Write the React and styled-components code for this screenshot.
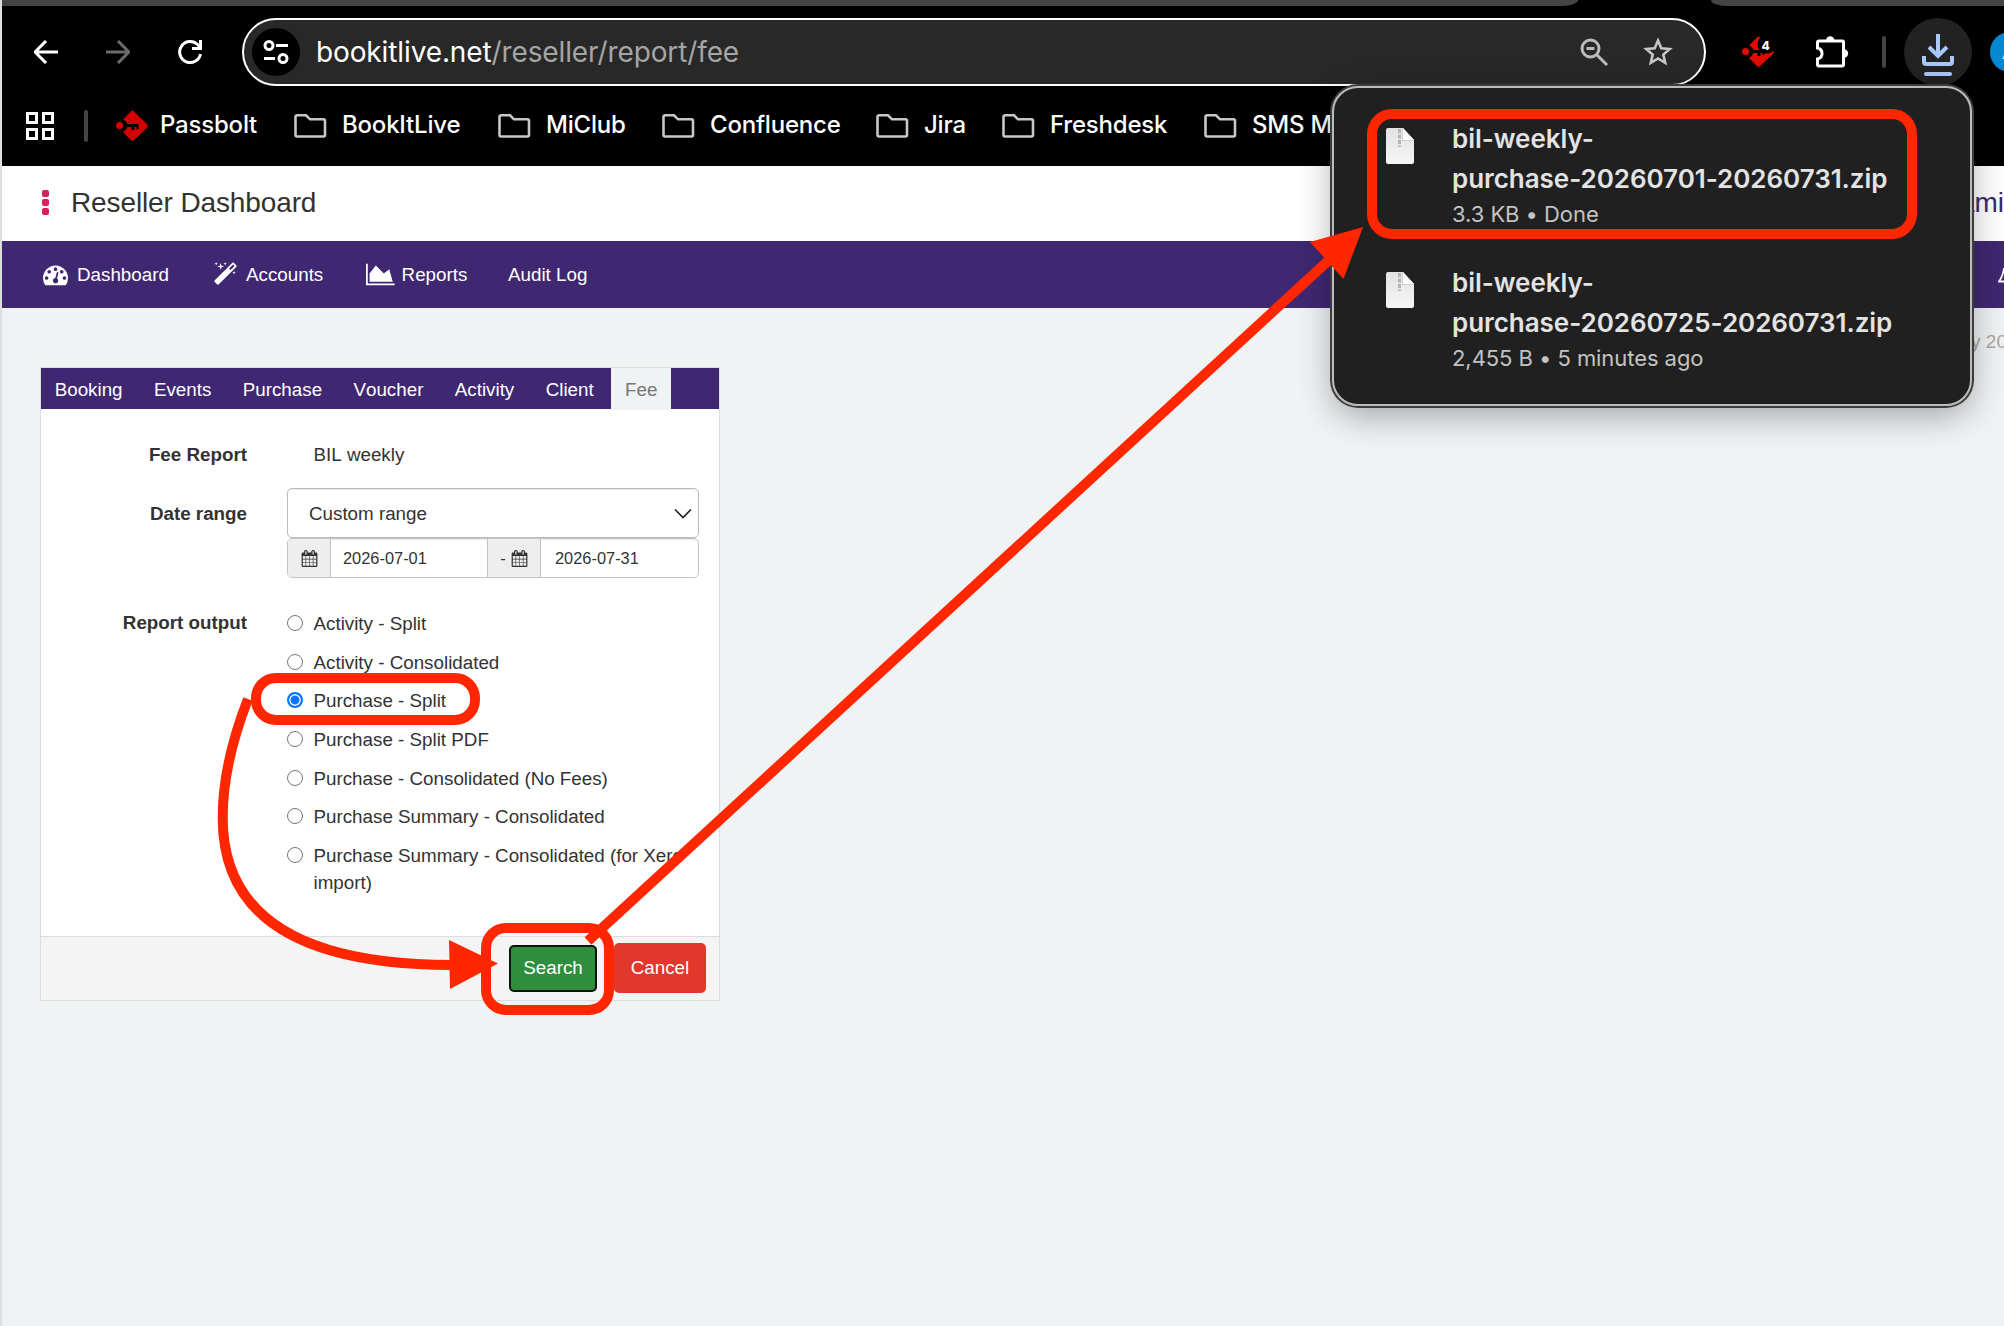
import React from 'react';
import styled, { createGlobalStyle } from 'styled-components';

const GlobalStyle = createGlobalStyle`
  * {
    box-sizing: border-box;
  }
  body {
    margin: 0;
    background: #eff3f4;
  }
`;

const ui = `Inter, 'Noto Sans', sans-serif`;
const purple = '#402771';
const red = '#ff2600';

const Window = styled.div`
  position: relative;
  width: 2004px;
  height: 1326px;
  overflow: hidden;
  background: #eff3f4;
  border-left: 2px solid #dcdfe2;
  font-family: 'Liberation Sans', Arial, sans-serif;
  font-size: 18.8px;
  font-kerning: none;
  color: #333;
`;

const Browser = styled.header`
  height: 166px;
  background: #000;
  font-family: ${ui};
  font-kerning: auto;
  color: #fff;
`;

const TabStrip = styled.div`
  display: flex;
  justify-content: space-between;
  height: 6px;
  background: #000;
`;

const InactiveTab = styled.div`
  width: ${(p) => p.$width}px;
  background: #444;
  border-radius: ${(p) => (p.$right ? '0 0 0 16px / 0 0 0 6px' : '0 0 16px 0 / 0 0 6px 0')};
`;

const Toolbar = styled.div`
  display: flex;
  align-items: center;
  height: 92px;
  padding-left: 24px;
`;

const ToolButton = styled.div`
  display: flex;
  flex: none;
  align-items: center;
  justify-content: center;
  width: 40px;
  height: 40px;
  margin-left: ${(p) => p.$before || 0}px;
  margin-right: ${(p) => p.$gap || 0}px;
`;

const Omnibox = styled.div`
  display: flex;
  flex: none;
  align-items: center;
  width: 1464px;
  height: 68px;
  padding: 0 26px 0 8px;
  border: 2px solid #fff;
  border-radius: 34px;
  background: #282828;
`;

const SiteInfo = styled.div`
  display: flex;
  align-items: center;
  justify-content: center;
  width: 48px;
  height: 48px;
  margin-right: 16px;
  border-radius: 50%;
  background: #000;
`;

const Url = styled.div`
  flex: 1;
  font-size: 28px;
  letter-spacing: -0.12px;
  white-space: nowrap;
  span {
    color: #a5a5a5;
  }
`;

const Separator = styled.div`
  flex: none;
  width: 4px;
  height: 32px;
  border-radius: 2px;
  background: #444;
  margin: 0 ${(p) => p.$after}px 0 ${(p) => p.$before}px;
`;

const DownloadButton = styled.div`
  display: flex;
  flex: none;
  align-items: center;
  justify-content: center;
  width: 68px;
  height: 68px;
  padding-top: 6px;
  border-radius: 50%;
  background: #222;
`;

const Avatar = styled.div`
  flex: none;
  width: 40px;
  height: 40px;
  margin-left: 18px;
  padding: 8px 0 0 12px;
  border-radius: 50%;
  background: #0488d2;
  font-size: 20px;
`;

const Bookmarks = styled.div`
  display: flex;
  align-items: center;
  height: 56px;
  padding-left: 24px;
`;

const Bookmark = styled.div`
  display: flex;
  flex: none;
  align-items: center;
  gap: ${(p) => p.$gap || 15}px;
  width: ${(p) => p.$width}px;
  font-size: 24px;
  font-weight: 500;
  line-height: 28px;
  letter-spacing: -0.2px;
  white-space: nowrap;
  span {
    padding-bottom: 2px;
  }
`;

const PageHeader = styled.div`
  display: flex;
  align-items: center;
  height: 75px;
  padding-left: 40px;
  background: #fff;
  font-size: 28px;
`;

const Dots = styled.div`
  display: flex;
  flex-direction: column;
  gap: 2px;
  margin-right: 22px;
  padding-bottom: 2px;
  i {
    width: 7px;
    height: 7px;
    border-radius: 2px;
    background: #db1f5b;
  }
`;

const PageTitle = styled.div`
  flex: 1;
  padding-bottom: 1px;
  letter-spacing: -0.12px;
`;

const UserName = styled.div`
  padding-bottom: 1px;
  color: ${purple};
`;

const Nav = styled.nav`
  display: flex;
  align-items: center;
  height: 67px;
  padding-left: 41px;
  background: ${purple};
  color: #fff;
`;

const NavItem = styled.div`
  display: flex;
  align-items: center;
  gap: ${(p) => p.$gap || 0}px;
  width: ${(p) => p.$width}px;
  white-space: nowrap;
`;

const NavBell = styled.div`
  display: flex;
  justify-content: flex-start;
  width: 6px;
  margin-left: auto;
`;

const DateLine = styled.div`
  height: 59px;
  padding-top: 23px;
  margin-right: -3px;
  text-align: right;
  font-size: 19px;
  color: #aaa69f;
`;

const Panel = styled.section`
  display: flex;
  flex-direction: column;
  width: 680px;
  height: 634px;
  margin-left: 38px;
  border: 1px solid #ddd;
  background: #fff;
`;

const Tabs = styled.div`
  display: flex;
  gap: 4px;
  height: 41px;
  background: ${purple};
`;

const Tab = styled.div`
  height: ${(p) => (p.$active ? 42 : 41)}px;
  padding: 0 13.7px;
  line-height: 43px;
  background: ${(p) => (p.$active ? '#eff3f4' : 'transparent')};
  color: ${(p) => (p.$active ? '#777' : '#fff')};
`;

const Form = styled.div`
  display: grid;
  grid-template-columns: 206px 412px;
  column-gap: 40px;
  align-content: start;
  flex: 1;
  padding-top: 32px;
`;

const Label = styled.div`
  height: ${(p) => p.$height}px;
  line-height: 27px;
  padding-top: ${(p) => p.$top || 0}px;
  text-align: right;
  font-weight: bold;
`;

const Value = styled.div`
  padding-left: 26.5px;
  line-height: 27px;
`;

const Select = styled.div`
  display: flex;
  align-items: center;
  justify-content: space-between;
  height: 50px;
  padding: 1px 5px 0 21px;
  border: 1px solid #bbb;
  border-radius: 5px;
  box-shadow: inset 0 1px 1px rgba(0, 0, 0, 0.08);
`;

const DateGroup = styled.div`
  display: grid;
  grid-template-columns: 43px 156px 54px 157px;
  height: 40px;
  border: 1px solid #c4c4c4;
  border-radius: 5px;
  overflow: hidden;
  font-size: 16.4px;
`;

const Addon = styled.div`
  display: flex;
  align-items: center;
  justify-content: center;
  gap: 5px;
  background: #eee;
  border-right: 1px solid #c4c4c4;
  border-left: ${(p) => (p.$middle ? '1px solid #c4c4c4' : 'none')};
`;

const DateInput = styled.div`
  display: flex;
  align-items: center;
  padding-left: ${(p) => p.$indent}px;
  box-shadow: inset 0 1px 1px rgba(0, 0, 0, 0.08);
`;

const Options = styled.div`
  display: flex;
  flex-direction: column;
  gap: 11.7px;
  padding-top: 1px;
`;

const Option = styled.label`
  display: flex;
  align-items: flex-start;
  gap: 10.5px;
  line-height: 27px;
`;

const Radio = styled.span`
  flex: none;
  width: 16px;
  height: 16px;
  margin-top: 5px;
  border: ${(p) => (p.$checked ? '2px solid #0a75ff' : '1px solid #767676')};
  border-radius: 50%;
  background: ${(p) => (p.$checked ? '#0a75ff' : '#fff')};
  box-shadow: ${(p) => (p.$checked ? 'inset 0 0 0 1.5px #fff' : 'none')};
`;

const Footer = styled.div`
  display: flex;
  align-items: center;
  justify-content: flex-end;
  gap: 17px;
  height: 64px;
  padding: 0 13px 1px 0;
  border-top: 1px solid #ddd;
  background: #f4f4f4;
`;

const Button = styled.div`
  display: flex;
  align-items: center;
  justify-content: center;
  width: ${(p) => p.$width}px;
  height: ${(p) => p.$height}px;
  border: ${(p) => (p.$focus ? '2.5px solid #0b120c' : 'none')};
  border-radius: 5px;
  background: ${(p) => p.$color};
  color: #fff;
`;

// download bubble, floats over the page
const Downloads = styled.aside`
  position: absolute;
  top: 86px;
  left: 1330px;
  width: 640px;
  height: 320px;
  padding: 31px 0 0 52px;
  border: 2px solid #bcbcbc;
  border-radius: 26px;
  background: #202020;
  box-shadow: 0 0 0 2px #3c3c3c, 0 10px 34px rgba(0, 0, 0, 0.32);
  font-family: ${ui};
  font-kerning: auto;
`;

const Download = styled.div`
  display: flex;
  gap: 38px;
  height: 144px;
  svg {
    flex: none;
    margin-top: 9px;
  }
`;

const FileName = styled.div`
  width: 460px;
  font-size: 26px;
  font-weight: 600;
  line-height: 40px;
  letter-spacing: -0.05px;
  color: #e3e3e3;
  white-space: nowrap;
`;

const FileMeta = styled.div`
  font-size: 22px;
  line-height: 30px;
  letter-spacing: -0.06px;
  color: #c3c3c3;
  white-space: nowrap;
`;

const Highlight = styled.div`
  position: absolute;
  left: ${(p) => p.$x}px;
  top: ${(p) => p.$y}px;
  width: ${(p) => p.$w}px;
  height: ${(p) => p.$h}px;
  border: 10px solid ${red};
  border-radius: 25px;
`;

const Arrows = styled.svg`
  position: absolute;
  top: 0;
  left: -2px;
`;

const FaIcon = ({ size, width = 1792, d, color = '#fff' }) => (
  <svg width={(size * width) / 1792} height={size} viewBox={`0 0 ${width} 1792`} fill={color}>
    <path d={d} />
  </svg>
);

const gaugePath =
  'M384 1152q0-53-37.5-90.5T256 1024t-90.5 37.5T128 1152t37.5 90.5T256 1280t90.5-37.5T384 1152zm192-448q0-53-37.5-90.5T448 576t-90.5 37.5T320 704t37.5 90.5T448 832t90.5-37.5T576 704zm428 481l101-382q6-26-7.5-48.5T1059 725t-48 6.5-30 39.5l-101 382q-60 5-107 43.5t-63 98.5q-20 77 20 146t117 89 146-20 89-117q16-60-6-117t-72-91zm660-33q0-53-37.5-90.5T1536 1024t-90.5 37.5-37.5 90.5 37.5 90.5 90.5 37.5 90.5-37.5 37.5-90.5zm-640-640q0-53-37.5-90.5T896 384t-90.5 37.5T768 512t37.5 90.5T896 640t90.5-37.5T1024 512zm448 192q0-53-37.5-90.5T1344 576t-90.5 37.5T1216 704t37.5 90.5T1344 832t90.5-37.5T1472 704zm320 448q0 261-141 483-19 29-54 29H195q-35 0-54-29Q0 1414 0 1152q0-182 71-348t191-286 286-191 348-71 348 71 286 191 191 286 71 348z';
const wandPath =
  'M1254 581l293-293-107-107-293 293zm447-293q0 27-18 45L397 1619q-18 18-45 18t-45-18l-198-198q-18-18-18-45t18-45L1395 45q18-18 45-18t45 18l198 198q18 18 18 45zM259 98l98 30-98 30-30 98-30-98-98-30 98-30 30-98zm350 162l196 60-196 60-60 196-60-196-196-60 196-60 60-196zm930 478l98 30-98 30-30 98-30-98-98-30 98-30 30-98zM899 98l98 30-98 30-30 98-30-98-98-30 98-30 30-98z';
const chartPath = 'M2048 1536v128H0V128h128v1408h1920zM1664 512l256 896H256V832l448-576 576 576z';
const calendarPath =
  'M192 1664h288v-288H192v288zm352 0h320v-288H544v288zm-352-352h288V992H192v320zm352 0h320V992H544v320zM192 928h288V640H192v288zm736 736h320v-288H928v288zM544 928h320V640H544v288zm768 736h288v-288h-288v288zm-384-352h320V992H928v320zM576 448V160q0-13-9.5-22.5T544 128h-64q-13 0-22.5 9.5T448 160v288q0 13 9.5 22.5T480 480h64q13 0 22.5-9.5T576 448zm736 864h288V992h-288v320zM928 928h320V640H928v288zm384 0h288V640h-288v288zm32-480V160q0-13-9.5-22.5T1312 128h-64q-13 0-22.5 9.5T1216 160v288q0 13 9.5 22.5t22.5 9.5h64q13 0 22.5-9.5t9.5-22.5zm384-64v1280q0 52-38 90t-90 38H192q-52 0-90-38t-38-90V384q0-52 38-90t90-38h128v-96q0-66 47-113T480 0h64q66 0 113 47t47 113v96h384v-96q0-66 47-113t113-47h64q66 0 113 47t47 113v96h128q52 0 90 38t38 90z';

const ArrowIcon = ({ color = '#fff', flip }) => (
  <svg width="24" height="24" viewBox="0 0 24 24" fill="none" stroke={color} strokeWidth="3">
    <path d={flip ? 'M0 12H22M12 1L23 12L12 23' : 'M24 12H2M12 1L1 12L12 23'} />
  </svg>
);

const ReloadIcon = () => (
  <svg width="26" height="26" viewBox="0 0 26 26" fill="none" stroke="#fff" strokeWidth="3">
    <path d="M23.5 15A10.5 10.5 0 1 1 20.5 5.500L23.5 8.5M23.5 1V9.5H15" />
  </svg>
);

const TuneIcon = () => (
  <svg width="26" height="24" viewBox="0 0 26 24" fill="none" stroke="#fff" strokeWidth="3">
    <circle cx="6" cy="5.5" r="4" />
    <path d="M13 5.5H25M1 18.500H12" />
    <circle cx="20" cy="18.500" r="4" />
  </svg>
);

const ZoomOutIcon = () => (
  <svg width="30" height="30" viewBox="0 0 30 30" fill="none" stroke="#bbb" strokeWidth="3">
    <circle cx="11.500" cy="11.500" r="8.500" />
    <path d="M17.500 17.500L28 28M7.500 11.500H15.500" />
  </svg>
);

const StarIcon = () => (
  <svg width="32" height="32" viewBox="0 0 32 32" fill="none" stroke="#c7c7c7" strokeWidth="2.6">
    <path d="M16 4.500L19.300 12.300L27.700 13L21.300 18.600L23.200 26.800L16 22.500L8.800 26.800L10.700 18.600L4.300 13L12.700 12.300Z" />
  </svg>
);

const PassboltIcon = () => (
  <svg width="32" height="32" viewBox="0 0 32 32">
    <path d="M15.200 1.200Q16.500 0 17.800 1.200L31.200 14.500Q32.500 16 31.200 17.500L17.800 30.300Q16.500 31.500 15.200 30.300L7 22Q1 15 7 9.500Z" fill="#d40101" />
    <circle cx="5" cy="15.500" r="6.500" fill="#000" />
    <path d="M10 14H22.500V19H20.500V17H18.500V20H15.500V17H10Z" fill="#000" />
    <circle cx="3.600" cy="15.500" r="3.600" fill="#d40101" />
  </svg>
);

const PassboltBadgeIcon = () => (
  <svg width="34" height="32" viewBox="0 0 34 32">
    <path d="M15.200 1.200Q16.500 0 17.800 1.200L31 14L32 17L17.800 30.300Q16.500 31.500 15.200 30.300L7 22Q1 15 7 9.500Z" fill="#e00b00" />
    <circle cx="5" cy="15.500" r="6.500" fill="#000" />
    <path d="M10 14H22.500V19H20.500V17H18.500V20H15.500V17H10Z" fill="#000" />
    <circle cx="25" cy="8" r="9.500" fill="#000" />
    <circle cx="3.600" cy="15.500" r="3.600" fill="#e00b00" />
    <text x="19.500" y="13.500" fontFamily="Inter, sans-serif" fontSize="12" fontWeight="800" fill="#fff">
      4
    </text>
  </svg>
);

const PuzzleIcon = () => (
  <svg width="34" height="34" viewBox="0 0 34 34">
    <path
      d="M4 6H27.500Q28.500 6 28.500 7V29.500Q28.500 31 27 31H4Q2.500 31 2.500 29.500V24Q7 23 7 18.500Q7 14 2.500 13V7.500Q2.500 6 4 6Z"
      fill="none"
      stroke="#fff"
      strokeWidth="3"
    />
    <path d="M11 5.500A4.200 4.200 0 0 1 19.400 5.500ZM29 14.300A4.200 4.200 0 0 1 29 22.700Z" fill="#fff" />
  </svg>
);

const DownloadIcon = () => (
  <svg width="32" height="44" viewBox="0 0 32 44" fill="none" stroke="#a8c7fa" strokeWidth="4">
    <path d="M16 1V23M7 14L16 23L25 14M2 23V29Q2 31 4 31H28Q30 31 30 29V23" />
    <path d="M4 41H28" strokeLinecap="round" />
  </svg>
);

const AppsIcon = () => (
  <svg width="28" height="28" viewBox="0 0 28 28" fill="none" stroke="#fff" strokeWidth="3">
    <path d="M1.500 1.500H10.500V10.500H1.500ZM17.500 1.500H26.500V10.500H17.500ZM1.500 17.500H10.500V26.500H1.500ZM17.500 17.500H26.500V26.500H17.500Z" />
  </svg>
);

const FolderIcon = () => (
  <svg width="33" height="24" viewBox="0 0 33 24" fill="none" stroke="#c7c7c7" strokeWidth="2.600">
    <path d="M3.500 1.300H12L16 5.300H29.500Q31 5.300 31 6.800V21Q31 22.500 29.500 22.500H3Q1.500 22.500 1.500 21V3.300Q1.500 1.300 3.500 1.300Z" />
  </svg>
);

const BellIcon = () => (
  <svg width="6" height="24" viewBox="0 0 6 24" fill="none" stroke="#fff" strokeWidth="1.800">
    <path d="M6 5Q5 13 1 18.500H6" />
  </svg>
);

const FileIcon = () => (
  <svg width="28" height="36" viewBox="0 0 28 36">
    <defs>
      <linearGradient id="sheet" x1="0" y1="0" x2="0" y2="1">
        <stop offset="0" stopColor="#e2e2e2" />
        <stop offset="1" stopColor="#f7f7f7" />
      </linearGradient>
    </defs>
    <path d="M2 0H17L28 12V34Q28 36 26 36H2Q0 36 0 34V2Q0 0 2 0Z" fill="url(#sheet)" />
    <path d="M17 0V10Q17 12 19 12H28Z" fill="#fff" />
    <path d="M13.500 1V19" stroke="#b5b5b5" strokeWidth="3" strokeDasharray="4 1.500" fill="none" />
    <path d="M16.500 2V12.500H27" stroke="#d0d0d0" strokeWidth="1" fill="none" />
  </svg>
);

const folders = [
  { name: 'BookItLive', width: 204 },
  { name: 'MiClub', width: 164 },
  { name: 'Confluence', width: 214 },
  { name: 'Jira', width: 126 },
  { name: 'Freshdesk', width: 202 },
  { name: 'SMS M', width: 140 },
];

const tabs = ['Booking', 'Events', 'Purchase', 'Voucher', 'Activity', 'Client', 'Fee'];

const outputs = [
  'Activity - Split',
  'Activity - Consolidated',
  'Purchase - Split',
  'Purchase - Split PDF',
  'Purchase - Consolidated (No Fees)',
  'Purchase Summary - Consolidated',
  'Purchase Summary - Consolidated (for Xero import)',
];

const downloads = [
  { range: '20260701-20260731', meta: '3.3 KB • Done' },
  { range: '20260725-20260731', meta: '2,455 B • 5 minutes ago' },
];

const App = () => (
  <>
    <GlobalStyle />
    <Window>
      <Browser>
        <TabStrip>
          <InactiveTab $width={1576} />
          <InactiveTab $width={293} $right />
        </TabStrip>
        <Toolbar>
          <ToolButton $gap={32}>
            <ArrowIcon />
          </ToolButton>
          <ToolButton $gap={32}>
            <ArrowIcon color="#6b6b6b" flip />
          </ToolButton>
          <ToolButton $gap={32}>
            <ReloadIcon />
          </ToolButton>
          <Omnibox>
            <SiteInfo>
              <TuneIcon />
            </SiteInfo>
            <Url>
              bookitlive.net<span>/reseller/report/fee</span>
            </Url>
            <ToolButton $gap={24}>
              <ZoomOutIcon />
            </ToolButton>
            <ToolButton>
              <StarIcon />
            </ToolButton>
          </Omnibox>
          <ToolButton $before={33} $gap={33}>
            <PassboltBadgeIcon />
          </ToolButton>
          <ToolButton>
            <PuzzleIcon />
          </ToolButton>
          <Separator $before={30} $after={18} />
          <DownloadButton>
            <DownloadIcon />
          </DownloadButton>
          <Avatar>A</Avatar>
        </Toolbar>
        <Bookmarks>
          <AppsIcon />
          <Separator $before={30} $after={28} />
          <Bookmark $gap={12} $width={178}>
            <PassboltIcon />
            <span>Passbolt</span>
          </Bookmark>
          {folders.map((folder) => (
            <Bookmark key={folder.name} $width={folder.width}>
              <FolderIcon />
              <span>{folder.name}</span>
            </Bookmark>
          ))}
        </Bookmarks>
      </Browser>

      <PageHeader>
        <Dots>
          <i />
          <i />
          <i />
        </Dots>
        <PageTitle>Reseller Dashboard</PageTitle>
        <UserName>ami</UserName>
      </PageHeader>
      <Nav>
        <NavItem $gap={9} $width={170}>
          <FaIcon size={25} d={gaugePath} />
          Dashboard
        </NavItem>
        <NavItem $gap={8} $width={153}>
          <FaIcon size={25} d={wandPath} />
          Accounts
        </NavItem>
        <NavItem $gap={7} $width={142}>
          <FaIcon size={25} width={2048} d={chartPath} />
          Reports
        </NavItem>
        <NavItem>Audit Log</NavItem>
        <NavBell>
          <BellIcon />
        </NavBell>
      </Nav>
      <DateLine>y 20</DateLine>

      <Panel>
        <Tabs>
          {tabs.map((tab) => (
            <Tab key={tab} $active={tab === 'Fee'}>
              {tab}
            </Tab>
          ))}
        </Tabs>
        <Form>
          <Label $height={47}>Fee Report</Label>
          <Value>BIL weekly</Value>
          <Label $height={121} $top={12}>
            Date range
          </Label>
          <div>
            <Select>
              Custom range
              <svg width="20" height="12" viewBox="0 0 20 12" fill="none" stroke="#222" strokeWidth="1.700">
                <path d="M2 1.500L10 9.500L18 1.500" />
              </svg>
            </Select>
            <DateGroup>
              <Addon>
                <FaIcon size={17} d={calendarPath} color="#333" />
              </Addon>
              <DateInput $indent={12}>2026-07-01</DateInput>
              <Addon $middle>
                -
                <FaIcon size={17} d={calendarPath} color="#333" />
              </Addon>
              <DateInput $indent={14}>2026-07-31</DateInput>
            </DateGroup>
          </div>
          <Label>Report output</Label>
          <Options>
            {outputs.map((output) => (
              <Option key={output}>
                <Radio $checked={output === 'Purchase - Split'} />
                {output}
              </Option>
            ))}
          </Options>
        </Form>
        <Footer>
          <Button $width={88} $height={47} $color="#2f8e3c" $focus>
            Search
          </Button>
          <Button $width={92} $height={50} $color="#e1372d">
            Cancel
          </Button>
        </Footer>
      </Panel>

      <Downloads>
        {downloads.map((file) => (
          <Download key={file.range}>
            <FileIcon />
            <div>
              <FileName>
                bil-weekly-
                <br />
                purchase-{file.range}.zip
              </FileName>
              <FileMeta>{file.meta}</FileMeta>
            </div>
          </Download>
        ))}
      </Downloads>

      <Highlight $x={1365} $y={109} $w={550} $h={130} />
      <Highlight $x={249} $y={673} $w={229} $h={52} />
      <Highlight $x={479} $y={923} $w={133} $h={92} />
      <Arrows width="2004" height="1326" fill="none" stroke={red} strokeWidth="10">
        <path d="M588 941L1328 261" />
        <path d="M1363 227L1310 242L1343.500 279Z" fill={red} stroke="none" />
        <path d="M248 699C232 740 222.700 780 222.700 818C222.700 910 290 965 452 965" />
        <path d="M449 940L450 989L498 963.500Z" fill={red} stroke="none" />
      </Arrows>
    </Window>
  </>
);

export default App;
